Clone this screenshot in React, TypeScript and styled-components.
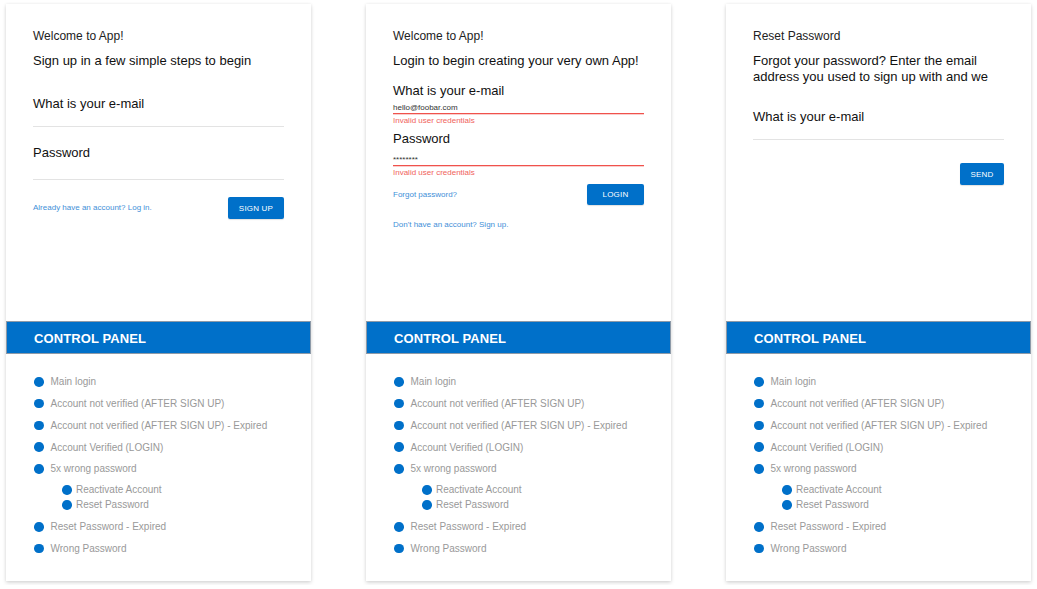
import React from "react";
import styled, { createGlobalStyle } from "styled-components";

const GlobalStyle = createGlobalStyle`
  html, body {
    margin: 0;
    padding: 0;
    background: #ffffff;
    font-family: "Liberation Sans", Arial, Helvetica, sans-serif;
  }
  * { box-sizing: border-box; }
`;

const BLUE = "#0070c9";

const Page = styled.div`
  display: flex;
  gap: 55px;
  padding: 4px 6px;
`;

const Card = styled.section`
  width: 305px;
  height: 577px;
  background: #fff;
  display: flex;
  flex-direction: column;
  box-shadow: 0 2px 4px rgba(0, 0, 0, 0.14), 0 0 3px rgba(0, 0, 0, 0.07);
`;

const Body = styled.div`
  height: 317px;
  padding: 25px 27px 0;
  display: flex;
  flex-direction: column;
`;

const Eyebrow = styled.div`
  font-size: 12px;
  line-height: 14px;
  color: #222;
`;

const Lead = styled.p`
  margin: 10px 0 0;
  font-size: 13px;
  line-height: 16px;
  color: #111;
`;

const Field = styled.div<{ $mt: number }>`
  margin-top: ${(p) => p.$mt}px;
  display: flex;
  flex-direction: column;
`;

const Label = styled.label`
  font-size: 13px;
  line-height: 16px;
  color: #111;
`;

const InputLine = styled.div<{ $h: number; $error?: boolean }>`
  height: ${(p) => p.$h + 1}px;
  border-bottom: 1px solid ${(p) => (p.$error ? "#f0524c" : "#e3e3e3")};
  box-shadow: ${(p) => (p.$error ? "0 1px 0 rgba(240, 90, 85, 0.3)" : "none")};
  display: flex;
  align-items: flex-end;
  padding-bottom: 0;
  font-size: 8px;
  line-height: 10px;
  color: #333;
`;

const ErrorText = styled.div`
  margin-top: 2px;
  font-size: 8px;
  line-height: 10px;
  color: #f0625c;
`;

const ActionRow = styled.div<{ $mt: number; $end?: boolean }>`
  margin-top: ${(p) => p.$mt}px;
  display: flex;
  align-items: center;
  justify-content: ${(p) => (p.$end ? "flex-end" : "space-between")};
`;

const TextLink = styled.a<{ $mt?: number }>`
  display: block;
  margin-top: ${(p) => p.$mt ?? 0}px;
  font-size: 8px;
  line-height: 10px;
  color: #3f8fd8;
  text-decoration: none;
  cursor: pointer;
`;

const Button = styled.button<{ $w: number; $h: number }>`
  width: ${(p) => p.$w}px;
  height: ${(p) => p.$h}px;
  padding: 0;
  border: none;
  border-radius: 2px;
  background: ${BLUE};
  color: #fff;
  font-family: inherit;
  font-size: 8px;
  letter-spacing: 0.2px;
  text-transform: uppercase;
  box-shadow: 0 1px 1px rgba(0, 0, 0, 0.12);
  cursor: pointer;
`;

const PanelHeader = styled.h2`
  margin: 0;
  height: 33px;
  background: ${BLUE};
  border: 1px solid #8d9aa8;
  padding: 2px 0 0 27px;
  display: flex;
  align-items: center;
  font-size: 13px;
  font-weight: 700;
  color: #fff;
  letter-spacing: 0.1px;
`;

const PanelList = styled.ul`
  list-style: none;
  margin: 0;
  padding: 17px 27px 0;
`;

const Item = styled.li<{ $sub?: boolean }>`
  display: flex;
  align-items: center;
  gap: ${(p) => (p.$sub ? 4.5 : 7)}px;
  height: ${(p) => (p.$sub ? 15 : 21.75)}px;
  padding-left: ${(p) => (p.$sub ? 29 : 1)}px;
  font-size: 10px;
  color: #999;
`;

const Dot = styled.span`
  width: 9.5px;
  height: 9.5px;
  border-radius: 50%;
  background: ${BLUE};
  flex: none;
`;

const SubList = styled.ul`
  list-style: none;
  margin: 2.6px 0 3.6px;
  padding: 0;
`;

const ControlPanel: React.FC = () => (
  <>
    <PanelHeader>CONTROL PANEL</PanelHeader>
    <PanelList>
      {[
        "Main login",
        "Account not verified (AFTER SIGN UP)",
        "Account not verified (AFTER SIGN UP) - Expired",
        "Account Verified (LOGIN)",
        "5x wrong password",
      ].map((t) => (
        <Item key={t}>
          <Dot />
          {t}
        </Item>
      ))}
      <SubList>
        {["Reactivate Account", "Reset Password"].map((t) => (
          <Item key={t} $sub>
            <Dot />
            {t}
          </Item>
        ))}
      </SubList>
      {["Reset Password - Expired", "Wrong Password"].map((t) => (
        <Item key={t}>
          <Dot />
          {t}
        </Item>
      ))}
    </PanelList>
  </>
);

export default function App() {
  return (
    <>
      <GlobalStyle />
      <Page>
        <Card>
          <Body>
            <Eyebrow>Welcome to App!</Eyebrow>
            <Lead>Sign up in a few simple steps to begin</Lead>
            <Field $mt={27}>
              <Label>What is your e-mail</Label>
              <InputLine $h={14} />
            </Field>
            <Field $mt={18}>
              <Label>Password</Label>
              <InputLine $h={18} />
            </Field>
            <ActionRow $mt={17}>
              <TextLink>Already have an account? Log in.</TextLink>
              <Button $w={56} $h={22}>Sign up</Button>
            </ActionRow>
          </Body>
          <ControlPanel />
        </Card>

        <Card>
          <Body>
            <Eyebrow>Welcome to App!</Eyebrow>
            <Lead>Login to begin creating your very own App!</Lead>
            <Field $mt={14}>
              <Label>What is your e-mail</Label>
              <InputLine $h={14} $error>hello@foobar.com</InputLine>
              <ErrorText>Invalid user credentials</ErrorText>
            </Field>
            <Field $mt={5}>
              <Label>Password</Label>
              <InputLine $h={18} $error>********</InputLine>
              <ErrorText>Invalid user credentials</ErrorText>
            </Field>
            <ActionRow $mt={6}>
              <TextLink>Forgot password?</TextLink>
              <Button $w={57} $h={21}>Login</Button>
            </ActionRow>
            <TextLink $mt={15}>Don't have an account? Sign up.</TextLink>
          </Body>
          <ControlPanel />
        </Card>

        <Card>
          <Body>
            <Eyebrow>Reset Password</Eyebrow>
            <Lead>
              Forgot your password? Enter the email
              <br />
              address you used to sign up with and we
            </Lead>
            <Field $mt={24}>
              <Label>What is your e-mail</Label>
              <InputLine $h={14} />
            </Field>
            <ActionRow $mt={23} $end>
              <Button $w={44} $h={22}>Send</Button>
            </ActionRow>
          </Body>
          <ControlPanel />
        </Card>
      </Page>
    </>
  );
}
